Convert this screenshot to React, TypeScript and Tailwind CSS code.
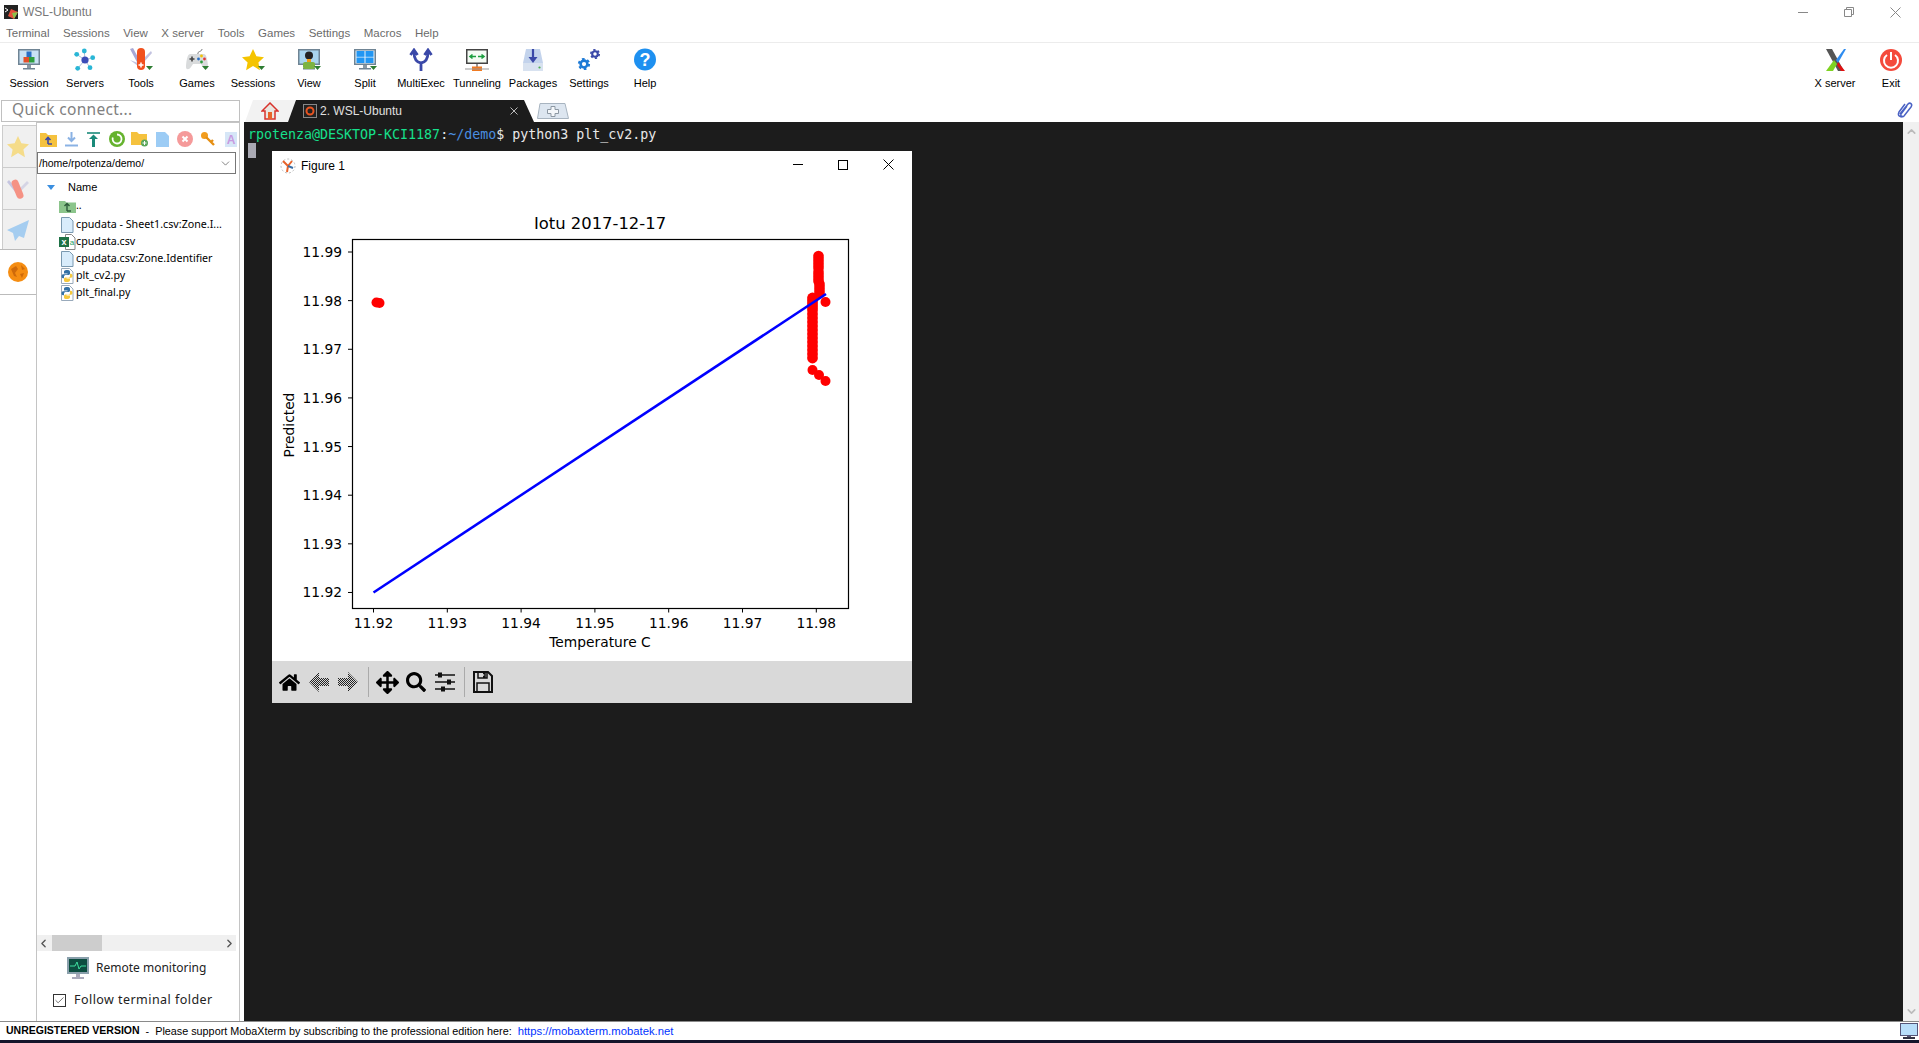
import React from "react";
import { FaHome, FaArrowsAlt, FaSearch } from "react-icons/fa";
import { ChevronDown, ChevronLeft, ChevronRight, ChevronUp, Check } from "lucide-react";

const Mon = ({ children, screen = "#5b9bd5" }: { children?: React.ReactNode; screen?: string }) => (
  <>
    <rect x="1" y="1" width="22" height="16" fill="#6f8494" />
    <rect x="2.500" y="2.500" width="19" height="13" fill={screen} />
    {children}
    <rect x="10" y="17" width="4" height="3" fill="#8a99a5" />
    <rect x="6" y="20" width="12" height="1.500" fill="#6f8494" />
  </>
);
const Drop = () => <path d="M17 18h7l-3.500 4z" fill="#2e7d32" />;

const Gear = ({ x, y, r, c }: { x: number; y: number; r: number; c: string }) => (
  <g fill="none" stroke={c}>
    <circle cx={x} cy={y} r={r} strokeWidth={r * 0.75} />
    <circle cx={x} cy={y} r={r * 1.5} strokeWidth={r * 0.6} strokeDasharray={`${r * 0.78} ${r * 0.79}`} />
  </g>
);

const tools: [string, React.ReactNode][] = [
  ["Session", <Mon screen="#c9e2f5"><rect x="9.500" y="3.500" width="5" height="5.500" fill="#2a6fc4" /><rect x="6.500" y="9" width="5.500" height="5.500" fill="#e2502a" /><rect x="12" y="9" width="5.500" height="5.500" fill="#2e9e3f" /></Mon>],
  ["Servers", <><path d="M12 12L11.300 3M12 12L3.700 6.300M12 12L19.700 9.700M12 12L4.700 20.300M12 12L17 19.700" stroke="#a9bfd8" strokeWidth="1" /><circle cx="12" cy="12" r="3.600" fill="#3b4cb8" /><circle cx="11.300" cy="3" r="2.400" fill="#29b6d6" /><circle cx="3.700" cy="6.300" r="2.400" fill="#29b6d6" /><circle cx="19.700" cy="9.700" r="2.400" fill="#29b6d6" /><circle cx="4.700" cy="20.300" r="2.400" fill="#29b6d6" /><circle cx="17" cy="19.700" r="2.400" fill="#29b6d6" /></>],
  ["Tools", <><path d="M1 1l3-1 7 13-2 3z" fill="#a8a8d6" /><path d="M1 12l8 3v3z" fill="#c2c2e0" /><path d="M22 3l1 2-8 9-2-2z" fill="#c2c2e0" /><rect x="8" y="0" width="8" height="22" rx="4" fill="#f1511e" /><path d="M12 14.500v5M9.500 17h5" stroke="#fff" strokeWidth="1.500" /><Drop /></>],
  ["Games", <><path d="M13 6c-1-3 4-2 4-5" stroke="#777" fill="none" /><path d="M5 6h14c3 0 4 10 4 13 0 3-3 3-5 0l-2-3H8l-2 3c-2 3-5 3-5 0 0-3 1-13 4-13z" fill="#d9dbdc" /><circle cx="16.500" cy="8" r="1.400" fill="#f2c200" /><circle cx="19.500" cy="11" r="1.400" fill="#e53935" /><circle cx="13.500" cy="11" r="1.400" fill="#2a6fc4" /><circle cx="16.500" cy="14" r="1.400" fill="#2e9e3f" /><path d="M4.500 11h5M7 8.500v5" stroke="#444" strokeWidth="1.600" /><Drop /></>],
  ["Sessions", <><path d="M12 1l3.400 7.200 7.600 1-5.600 5.300 1.500 7.700L12 18l-6.900 4.200 1.500-7.700L1 9.200l7.600-1z" fill="#f5c400" /><Drop /></>],
  ["View", <><Mon screen="#a9d5ee"><circle cx="12" cy="7.500" r="4" fill="#222" /></Mon><rect x="6" y="14" width="12" height="7" rx="2" fill="#7cb342" /><rect x="10" y="11" width="4" height="3" fill="#f39c12" /><Drop /></>],
  ["Split", <><Mon screen="#e8f2fa"><rect x="3.500" y="3" width="8" height="5.800" fill="#2196f3" /><rect x="12.500" y="3" width="8" height="5.800" fill="#2196f3" /><rect x="3.500" y="9.500" width="8" height="5.500" fill="#2196f3" /><rect x="12.500" y="9.500" width="8" height="5.500" fill="#2196f3" /></Mon><Drop /></>],
  ["MultiExec", <path d="M12 23v-8M12 15C6 14 5 9 5 4M12 15c6-1 7-6 7-11M1.500 7L5 2l3.500 5M15.500 7L19 2l3.500 5" fill="none" stroke="#3a48a8" strokeWidth="2.800" />],
  ["Tunneling", <><rect x="1" y="1" width="22" height="15" fill="#444" /><rect x="2.500" y="2.500" width="19" height="12" fill="#f4fbf4" /><path d="M5 8.500h6M7.500 6.500l-2.500 2 2.500 2M13 8.500h6M16.500 6.500l2.500 2-2.500 2" stroke="#1b9e3f" strokeWidth="1.600" fill="none" /><rect x="11" y="16" width="2" height="3" fill="#999" /><rect x="7" y="18.500" width="10" height="4.500" fill="#f07b22" /><path d="M0 21h24" stroke="#999" /></>],
  ["Packages", <><path d="M5 1h14l3 14v8H2v-8z" fill="#c3d3ec" /><path d="M2 15h20v8H2z" fill="#d8e2f0" /><path d="M12 1v11" stroke="#3a48a8" strokeWidth="2.200" /><path d="M7.500 9h9L12 15z" fill="#3a48a8" /><circle cx="18.500" cy="19.500" r="1.100" fill="#4caf50" /></>],
  ["Settings", <><Gear x={7} y={16} r={3.400} c="#1d7ad6" /><Gear x={18} y={6} r={2.800} c="#3a48a8" /></>],
  ["Help", <><circle cx="12" cy="11.500" r="11" fill="#1e90f0" /><text x="12" y="18" textAnchor="middle" fontSize="18" fontWeight="700" fill="#fff" fontFamily="Liberation Sans, sans-serif">?</text></>],
];

const Sv = ({ children, size = 24 }: { children: React.ReactNode; size?: number }) => (
  <svg width={size} height={size} viewBox="0 0 24 24">{children}</svg>
);

const ToolBtn = ({ label, icon }: { label: string; icon: React.ReactNode }) => (
  <div className="w-[56px] flex flex-col items-center shrink-0">
    <Sv>{icon}</Sv>
    <span className="mt-[4px] text-[11px] leading-[14px] text-black whitespace-nowrap">{label}</span>
  </div>
);

const FileDoc = () => (
  <svg width="14" height="16" viewBox="0 0 14 16"><path d="M1.500.5h8l3.500 3.500v11.500h-11.500z" fill="#d8ecfb" stroke="#7a99b0" /></svg>
);
const Py = () => (
  <svg width="14" height="16" viewBox="0 0 14 16">
    <path d="M1.500.5h8l3.500 3.500v11.500h-11.500z" fill="#fff" stroke="#9ab" />
    <path d="M7 2c-3 0-3 1-3 2.500v1h3.500v.7H3c-2 0-2 4 0 4h1V8.500c0-1 1-1.500 2-1.500h2.500c1 0 1.500-1 1.500-1.500V4C10 2.500 9 2 7 2z" fill="#3572a5" />
    <path d="M7 14c3 0 3-1 3-2.500v-1H6.500v-.7H11c2 0 2-4 0-4h-1v2.200c0 1-1 1.500-2 1.500H5.500c-1 0-1.500 1-1.500 1.500v1.500C4 13.500 5 14 7 14z" fill="#f5c83c" />
  </svg>
);
const Xl = () => (
  <svg width="17" height="16" viewBox="0 0 17 16">
    <path d="M6.500.5h6l3.500 3.500v11.500h-9.500z" fill="#fff" stroke="#888" />
    <rect x="0" y="3" width="10" height="10" fill="#1e7145" />
    <text x="5" y="11" textAnchor="middle" fontSize="9" fontWeight="700" fill="#fff" fontFamily="Liberation Sans, sans-serif">x</text>
    <text x="13" y="11" textAnchor="middle" fontSize="8" fill="#1e9e65" fontFamily="Liberation Sans, sans-serif">a</text>
  </svg>
);
const Up = () => (
  <svg width="17" height="14" viewBox="0 0 17 14"><path d="M0 2h6l1.500 1.500H17V14H0z" fill="#8cc58c" /><path d="M8 12V5M5.500 7L8 4.500 10.500 7M8 12h4" stroke="#2d5a3a" strokeWidth="1.400" fill="none" /></svg>
);

const files: [React.ReactNode, string][] = [
  [<Up />, ".."],
  [<FileDoc />, "cpudata - Sheet1.csv:Zone.I..."],
  [<Xl />, "cpudata.csv"],
  [<FileDoc />, "cpudata.csv:Zone.Identifier"],
  [<Py />, "plt_cv2.py"],
  [<Py />, "plt_final.py"],
];

const panelIcons: React.ReactNode[] = [
  <svg width="17" height="15" viewBox="0 0 17 15"><path d="M0 1h6l2 2h9v12H0z" fill="#f5c23e" /><path d="M8 12V6M5.500 8L8 5.500 10.500 8M8 12h4" stroke="#3a48a8" strokeWidth="1.600" fill="none" /></svg>,
  <svg width="15" height="15" viewBox="0 0 15 15"><path d="M7.500 0v8M4 5.500l3.500 3.500 3.500-3.500" stroke="#8ab2e4" strokeWidth="2" fill="none" /><path d="M1 13.500h13" stroke="#8ab2e4" strokeWidth="2" /></svg>,
  <svg width="15" height="15" viewBox="0 0 15 15"><path d="M1 1h13" stroke="#1a8a7a" strokeWidth="1.600" /><path d="M7.500 15V5" stroke="#1a8a7a" strokeWidth="3" /><path d="M3 7l4.500-4.500L12 7z" fill="#1a8a7a" /></svg>,
  <svg width="16" height="16" viewBox="0 0 16 16"><circle cx="8" cy="8" r="8" fill="#65b32e" /><path d="M8 3.500a4.500 4.500 0 1 1-4.200 3" stroke="#fff" strokeWidth="1.800" fill="none" /></svg>,
  <svg width="18" height="16" viewBox="0 0 18 16"><path d="M0 1h6l2 2h8v11H0z" fill="#f5c23e" /><circle cx="13.500" cy="12" r="3.500" fill="#5aa65a" /><path d="M13.500 10v4M11.500 12h4" stroke="#fff" /></svg>,
  <svg width="13" height="15" viewBox="0 0 13 15"><path d="M0 0h9l4 4v11H0z" fill="#9cccf5" /></svg>,
  <svg width="16" height="16" viewBox="0 0 16 16"><circle cx="8" cy="8" r="8" fill="#f59a9a" /><path d="M5.500 5.500l5 5M10.500 5.500l-5 5" stroke="#fff" strokeWidth="2" /></svg>,
  <svg width="16" height="16" viewBox="0 0 16 16"><circle cx="4.500" cy="4.500" r="3.500" fill="#f29d1e" /><path d="M6 6l8 8M11 11l2-2" stroke="#e58e12" strokeWidth="2.400" /></svg>,
  <svg width="12" height="15" viewBox="0 0 12 15"><rect width="12" height="15" fill="#d6e6f7" /><text x="6" y="12" textAnchor="middle" fontSize="12" fontWeight="700" fill="#c79ae0" fontFamily="Liberation Sans, sans-serif">A</text></svg>,
];

const sideTabs: React.ReactNode[] = [
  <svg width="24" height="24" viewBox="0 0 24 24"><path d="M12 1l3.400 7.200 7.600 1-5.600 5.300 1.500 7.700L12 18l-6.900 4.200 1.500-7.700L1 9.200l7.600-1z" fill="#f5dc8a" /></svg>,
  <svg width="24" height="24" viewBox="0 0 24 24"><path d="M3 3l9 11-2 2L1 5z" fill="#c5c5e0" /><path d="M21 4l2 2-9 9-2-2z" fill="#d5d5e5" /><rect x="8" y="2" width="7" height="20" rx="3.500" fill="#f59284" transform="rotate(-22 12 12)" /></svg>,
  <svg width="24" height="24" viewBox="0 0 24 24"><path d="M23 2L1 12l6 3zM23 2L7 15l2 8 4-5zM23 2l-10 16 5 2z" fill="#a5cdf0" /></svg>,
  <svg width="20" height="20" viewBox="0 0 20 20"><circle cx="10" cy="10" r="10" fill="#f58d12" /><path d="M3 7l5-3 2 3-3 4 2 4-3-1zM13 3l4 4-3 1zM12 12l4-1-2 5z" fill="#cf6a0a" /></svg>,
];
const sideClasses = [
  "h-[42px] ml-[2px] w-[34px] pr-[3px] bg-[#f0f0f0] border-t border-l border-[#ccc] flex items-center justify-center",
  "h-[42px] ml-[2px] w-[34px] pr-[3px] bg-[#f0f0f0] border-t border-l border-[#ccc] flex items-center justify-center",
  "h-[40px] ml-[2px] w-[34px] pr-[3px] bg-[#f0f0f0] border-t border-l border-[#ccc] flex items-center justify-center",
  "h-[46px] w-[36px] pr-[1px] bg-white border-y border-[#bbb] flex items-center justify-center z-10",
];

const mono = "'DejaVu Sans Mono', monospace";
const mpl = "'DejaVu Sans', sans-serif";
const xTicks = ["11.92", "11.93", "11.94", "11.95", "11.96", "11.97", "11.98"];
const yTicks = ["11.99", "11.98", "11.97", "11.96", "11.95", "11.94", "11.93", "11.92"];
const topDots = [256, 259, 262, 265, 268, 272, 275, 278, 281, 284, 287, 290, 293];
const lowDots = [298, 301, 304, 307, 310, 314, 318, 322, 326, 330, 334, 338, 342, 346, 350, 354, 358];

const Plot = () => (
  <svg width="640" height="510" viewBox="272 151 640 510" className="block">
    <text x="600" y="229" textAnchor="middle" fontSize="16.400" fontFamily={mpl} fill="#000">Iotu 2017-12-17</text>
    {yTicks.map((t, i) => {
      const y = 252 + i * 48.64;
      return (
        <g key={t}>
          <path d={`M348 ${y}h4.500`} stroke="#000" />
          <text x="342" y={y + 5} textAnchor="end" fontSize="13.800" fontFamily={mpl} fill="#000">{t}</text>
        </g>
      );
    })}
    {xTicks.map((t, i) => {
      const x = 373.5 + i * 73.8;
      return (
        <g key={t}>
          <path d={`M${x} 608v4.500`} stroke="#000" />
          <text x={x} y="628" textAnchor="middle" fontSize="13.800" fontFamily={mpl} fill="#000">{t}</text>
        </g>
      );
    })}
    <text x="600" y="647" textAnchor="middle" fontSize="13.800" fontFamily={mpl} fill="#000">Temperature C</text>
    <text transform="translate(294 425) rotate(-90)" textAnchor="middle" fontSize="13.800" fontFamily={mpl} fill="#000">Predicted</text>
    <g fill="#ff0000">
      <circle cx="376.500" cy="302.500" r="5" />
      <circle cx="379.500" cy="303" r="5" />
      {topDots.map((y, i) => <circle key={y} cx={i > 8 ? 819.5 : 818.5} cy={y} r="5.300" />)}
      {lowDots.map((y) => <circle key={y} cx="812.500" cy={y} r="5.400" />)}
      <circle cx="825.500" cy="302" r="5" />
      <circle cx="812.500" cy="370" r="5" />
      <circle cx="819" cy="375" r="5" />
      <circle cx="825.500" cy="381" r="5" />
    </g>
    <path d="M373.500 592.500L826 294" stroke="#0000ff" strokeWidth="2.600" fill="none" />
    <rect x="352.500" y="239.500" width="496" height="369" fill="none" stroke="#000" strokeWidth="1.200" />
  </svg>
);

const Dither = ({ d, id }: { d: string; id: string }) => (
  <svg width="20" height="20" viewBox="0 0 20 20">
    <defs>
      <pattern id={id} width="2" height="2" patternUnits="userSpaceOnUse">
        <rect width="1" height="1" fill="#222" />
        <rect x="1" y="1" width="1" height="1" fill="#222" />
      </pattern>
    </defs>
    <path d={d} fill={`url(#${id})`} />
  </svg>
);

export default function App() {
  const ui = { fontFamily: "'Liberation Sans', sans-serif" };
  const noto = { fontFamily: "'Noto Sans', sans-serif" };
  return (
    <div className="w-[1919px] h-[1043px] overflow-hidden bg-white flex flex-col relative" style={ui}>
      {/* title bar */}
      <div className="h-[22px] flex items-center shrink-0 pl-[4px] pr-[18px] pt-[2px]">
        <svg width="14" height="14" viewBox="0 0 14 14"><rect width="14" height="14" fill="#222" /><path d="M7 4l7 3-4 7-6-3z" fill="#e8503a" /><path d="M8 8l6-1-4 7z" fill="#8bc34a" /><path d="M1 3l3 2-3 2" stroke="#fff" fill="none" /></svg>
        <span className="ml-[5px] text-[12px] leading-none text-[#777]">WSL-Ubuntu</span>
        <div className="ml-auto flex items-center gap-[36px]">
          <span className="w-[10px] h-px bg-[#888]" />
          <svg width="10" height="10" viewBox="0 0 10 10"><path d="M.5 2.500h7v7h-7zM2.500 2.500v-2h7v7h-2" fill="none" stroke="#888" /></svg>
          <svg width="11" height="11" viewBox="0 0 11 11"><path d="M.5.500l10 10M10.500.500l-10 10" stroke="#888" /></svg>
        </div>
      </div>
      {/* menu */}
      <div className="h-[21px] flex items-center gap-[13.500px] pl-[6px] pt-[3px] shrink-0 border-b border-[#ececec] text-[11.500px] text-[#6b6b6b]">
        {["Terminal", "Sessions", "View", "X server", "Tools", "Games", "Settings", "Macros", "Help"].map((m) => <span key={m}>{m}</span>)}
      </div>
      {/* toolbar */}
      <div className="h-[57px] flex pt-[5px] pl-[1px] shrink-0">
        {tools.map(([l, i]) => <ToolBtn key={l} label={l} icon={i} />)}
        <div className="ml-auto flex">
          <ToolBtn label="X server" icon={<><path d="M3 1h6l12 22h-6z" fill="#555" /><path d="M3 23l8-11 3 4-4 7z" fill="#7ed321" /><path d="M21 1l-8 11 2 3L23 1z" fill="#2e8cf0" /><path d="M15 14l7 9h-4l-4-6z" fill="#e01010" /></>} />
          <ToolBtn label="Exit" icon={<><circle cx="12" cy="12" r="11" fill="#f44a3c" /><path d="M8 7a7 7 0 1 0 8 0M12 4v8" stroke="#fff" strokeWidth="2" fill="none" /></>} />
        </div>
      </div>
      {/* tab row */}
      <div className="h-[22px] flex shrink-0">
        <div className="w-[239px] ml-px border border-[#c0c0c0] flex items-center pl-[10px] pb-[2px] text-[15.500px] text-[#808080] tracking-[.3px]" style={noto}>Quick connect...</div>
        <div className="flex items-end ml-[5px] flex-1">
          <div className="w-[50px] h-[22px] flex items-center justify-center pl-[4px] pr-[4px] bg-[#f2f2f2] [clip-path:polygon(0_100%,8px_0,100%_0,100%_100%)]">
            <svg width="18" height="18" viewBox="0 0 18 18"><path d="M9 1L1 9h3v8h10V9h3z" fill="#e9e6e0" stroke="#d8322c" strokeWidth="1.500" /><rect x="7" y="10" width="4" height="7" fill="#e8632a" /></svg>
          </div>
          <div className="-ml-[7px] w-[246px] h-[22px] bg-[#1c1c1c] flex items-center pl-[15px] pr-[16px] [clip-path:polygon(0_100%,8px_0,236px_0,100%_100%)]">
            <svg width="14" height="14" viewBox="0 0 14 14"><rect x=".5" y=".5" width="13" height="13" fill="#222" stroke="#888" /><circle cx="7" cy="7" r="3.500" fill="none" stroke="#e95420" strokeWidth="2" /></svg>
            <span className="ml-[3px] text-[12px] text-[#e0e0e0]">2. WSL-Ubuntu</span>
            <svg width="8" height="8" viewBox="0 0 8 8" className="ml-auto"><path d="M.5.500l7 7M7.500.500l-7 7" stroke="#bbb" /></svg>
          </div>
          <svg width="32" height="16" viewBox="0 0 32 16" className="ml-[3px] mb-[3px]">
            <path d="M3 .5h25l3.500 15H.5z" fill="#dde6f0" stroke="#a8b4c0" />
            <path d="M14 3.500h4v3h3.500v4H18v3h-4v-3h-3.500v-4H14z" fill="#f4f7fa" stroke="#8d98a3" />
          </svg>
          <svg width="18" height="18" viewBox="0 0 18 18" className="ml-auto mr-[5px] mb-[3px]"><path d="M4 13L12 3c2-2 5 0 3 3L8 15c-1.500 1.500-4 0-3-2l6-8M7 15c-2 2-6 0-4-4l6-8" fill="none" stroke="#4a62c4" strokeWidth="1.500" /></svg>
        </div>
      </div>
      {/* main */}
      <div className="flex-1 flex min-h-0">
        {/* side tabs */}
        <div className="w-[36px] shrink-0 pt-[3px] flex flex-col">
          {sideTabs.map((t, i) => <div key={i} className={sideClasses[i]}>{t}</div>)}
          <div className="flex-1" />
        </div>
        {/* panel */}
        <div className="w-[204px] shrink-0 border-l border-r border-t border-[#c4c4c4] flex flex-col">
          <div className="h-[29px] flex items-center overflow-hidden shrink-0 pt-[3px]">
            {panelIcons.map((p, i) => <div key={i} className="w-[22.800px] shrink-0 flex justify-center">{p}</div>)}
          </div>
          <div className="h-[22px] mr-[3px] border border-[#777] flex items-center pl-[1px] pr-[3px] pt-px text-[10.500px] text-black shrink-0">
            <span>/home/rpotenza/demo/</span>
            <ChevronDown className="ml-auto" size={13} strokeWidth={1.200} color="#444" />
          </div>
          <div className="h-[24px] flex items-center shrink-0 mt-px text-[11px] text-black pl-[10px]">
            <svg width="8" height="5" viewBox="0 0 8 5"><path d="M0 0h8L4 5z" fill="#3a8fe0" /></svg>
            <span className="ml-[13px]">Name</span>
          </div>
          <div className="flex flex-col pl-[21px]">
            {files.map(([ic, n], i) => (
              <div key={n} className={i === 0 ? "h-[17px] flex items-center pb-[4px]" : "h-[17px] flex items-center"}>
                <div className="w-[18px] flex justify-center shrink-0">{ic}</div>
                <span className="text-[10.700px] text-black whitespace-nowrap" style={noto}>{n}</span>
              </div>
            ))}
          </div>
          <div className="flex-1" />
          <div className="h-[16px] mr-[3px] bg-[#f0f0f0] flex items-center justify-between shrink-0">
            <div className="flex items-center h-full">
              <ChevronLeft size={13} strokeWidth={2.500} color="#555" />
              <div className="ml-[2px] w-[50px] h-full bg-[#cdcdcd]" />
            </div>
            <ChevronRight size={13} strokeWidth={2.500} color="#555" />
          </div>
          <div className="h-[33px] flex items-center pl-[30px] shrink-0">
            <svg width="22" height="22" viewBox="0 0 22 22"><rect width="22" height="17" fill="#8aa0ac" /><rect x="2" y="2" width="18" height="13" fill="#0d4d40" /><path d="M3 9h5l2-4 2 7 2-3h5" stroke="#3fe0a0" fill="none" /><rect x="9" y="17" width="4" height="3" fill="#aab" /><rect x="5" y="20" width="12" height="2" fill="#aab" /></svg>
            <span className="ml-[7px] text-[12px] text-[#222]" style={noto}>Remote monitoring</span>
          </div>
          <div className="h-[37px] flex items-center pl-[16px] pb-[5px] shrink-0">
            <span className="w-[13px] h-[13px] border border-[#333] flex items-center justify-center"><Check size={11} strokeWidth={1.500} color="#333" /></span>
            <span className="ml-[8px] text-[12.500px] text-[#222] tracking-[.45px]" style={noto}>Follow terminal folder</span>
          </div>
        </div>
        <div className="w-[4px] shrink-0" />
        {/* terminal */}
        <div className="flex-1 bg-[#1c1c1c] flex min-w-0 relative">
          <div className="flex-1 pl-[4px] pt-[5px]" style={{ fontFamily: mono }}>
            <div className="text-[13.300px] leading-[16px] whitespace-pre text-[#e8e8e8]">
              <span className="text-[#16e08c]">rpotenza@DESKTOP-KCI1187</span>:<span className="text-[#4a8fe0]">~/demo</span>$ python3 plt_cv2.py
            </div>
            <div className="w-[8px] h-[15px] bg-[#a9a9b3]" />
          </div>
          <div className="w-[16px] bg-[#f0f0f0] flex flex-col items-center justify-between shrink-0 py-[3px]">
            <ChevronUp size={13} strokeWidth={3} color="#bbb" />
            <ChevronDown size={13} strokeWidth={3} color="#bbb" />
          </div>
          {/* figure window floating over terminal */}
          <div className="absolute left-[28px] top-[29px] w-[640px] h-[552px] bg-white flex flex-col">
            <div className="absolute left-[8px] top-[6px] flex items-center">
              <svg width="16" height="16" viewBox="0 0 16 16"><circle cx="8" cy="8" r="7" fill="none" stroke="#bbb" strokeDasharray="2 2" /><path d="M8 8L3 3M8 8l4-5M8 8l-1 6" stroke="#e8632a" strokeWidth="2" /><path d="M8 8l5 2" stroke="#3a6ea5" strokeWidth="2" /></svg>
              <span className="ml-[5px] text-[12px] text-black">Figure 1</span>
            </div>
            <div className="absolute right-0 top-[8px] flex items-center">
              <span className="block w-[10px] h-px bg-black mr-[35px]" />
              <span className="block w-[10px] h-[10px] border border-black mr-[35px]" />
              <svg width="11" height="11" viewBox="0 0 11 11" className="mr-[18px]"><path d="M.5.500l10 10M10.500.500l-10 10" stroke="#000" /></svg>
            </div>
            <Plot />
            <div className="h-[42px] bg-[#d9d9d9] flex items-center text-black">
              <FaHome size={21} className="ml-[7px]" />
              <div className="ml-[9px]"><Dither id="dl" d="M10 0L0 10l10 10v-6h10V6H10z" /></div>
              <div className="ml-[9px]"><Dither id="dr" d="M10 0l10 10-10 10v-6H0V6h10z" /></div>
              <span className="ml-[10px] w-px h-[30px] bg-[#aaa]" />
              <FaArrowsAlt size={23} className="ml-[7px]" />
              <FaSearch size={20} className="ml-[7px]" />
              <svg width="20" height="20" viewBox="0 0 20 20" className="ml-[9px]">
                <path d="M0 3h20M0 10h20M0 17h20" stroke="#111" strokeWidth="1.600" />
                <rect x="3" y="0.500" width="4" height="5" fill="#111" />
                <rect x="12" y="7.500" width="4" height="5" fill="#111" />
                <rect x="6" y="14.500" width="4" height="5" fill="#111" />
              </svg>
              <span className="ml-[9px] w-px h-[30px] bg-[#aaa]" />
              <svg width="20" height="22" viewBox="0 0 20 22" className="ml-[8px]">
                <path d="M1 1h14l4 4v16H1z" fill="none" stroke="#111" strokeWidth="2" />
                <path d="M5 1v6h9V1M10 2.500h2v3h-2" fill="none" stroke="#111" strokeWidth="1.500" />
                <rect x="4" y="12" width="12" height="9" fill="none" stroke="#111" strokeWidth="1.500" />
              </svg>
            </div>
          </div>
        </div>
      </div>
      {/* status */}
      <div className="h-[19px] border-t border-[#8a8a8a] bg-white flex items-center pl-[6px] text-[10.800px] text-black shrink-0 whitespace-pre">
        <span className="font-bold text-[10.500px]">UNREGISTERED VERSION</span>
        <span>  -  Please support MobaXterm by subscribing to the professional edition here:  </span>
        <span className="text-[#0033ff] text-[11.300px]">https://mobaxterm.mobatek.net</span>
        <svg width="18" height="16" viewBox="0 0 18 16" className="ml-auto mr-px"><rect x=".5" y=".5" width="17" height="12" fill="#b8defa" stroke="#557" /><rect x="7" y="13" width="4" height="1" fill="#557" /><rect x="3" y="14" width="12" height="2" fill="#334" /></svg>
      </div>
      <div className="h-[3px] bg-[#14142a] shrink-0" />
    </div>
  );
}
